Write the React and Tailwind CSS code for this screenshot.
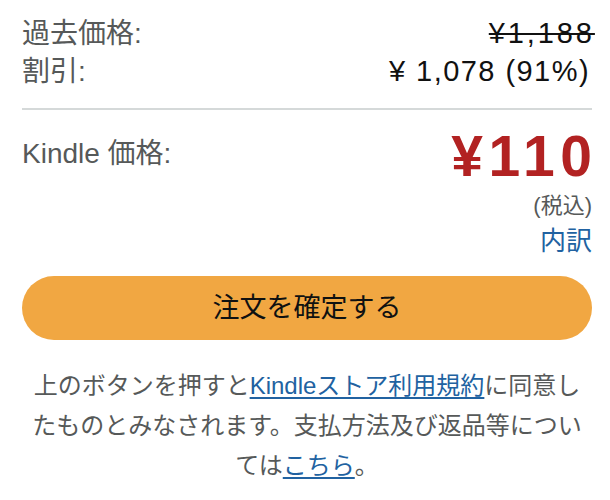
export default function App() {
  const font = { fontFamily: '"Liberation Sans", "Noto Sans CJK JP", sans-serif' };
  return (
    <div className="w-[610px] h-[500px] bg-white overflow-hidden" style={font}>
      <div className="pl-[22px] pr-[18px] pt-[15px]">
        <div className="flex justify-between items-center h-[38px] text-[28px]">
          <span className="text-[#565959]">過去価格:</span>
          <span className="text-[29px] text-[#111] line-through tracking-[0.1em] mr-[-0.1em]">¥1,188</span>
        </div>
        <div className="flex justify-between items-center h-[38px] text-[28px]">
          <span className="text-[#565959]">割引:</span>
          <span className="text-[29px] text-[#111] tracking-[0.05em] mr-[2px]">¥ 1,078 (91%)</span>
        </div>
        <div className="h-[2px] bg-[#D5D9D9] mt-[17px]"></div>

        <div className="flex justify-between items-start pt-[16px]">
          <span className="text-[28px] text-[#565959] leading-[38px] mt-[9px]">Kindle 価格:</span>
          <div className="flex flex-col items-end">
            <span className="text-[57px] font-bold text-[#B22222] leading-[60px] tracking-[0.1em] mr-[-0.1em]">¥110</span>
            <span className="text-[22px] text-[#565959] leading-[28px] mt-[6px]">(税込)</span>
            <span className="text-[26px] text-[#2162A1] leading-[30px] mt-[6px]">内訳</span>
          </div>
        </div>

        <button className="mt-[20px] w-full h-[64px] rounded-full bg-[#F1A742] text-[#0F1111] text-[27px] flex items-center justify-center">
          注文を確定する
        </button>

        <p className="mt-[26px] text-center text-[24px] leading-[40px] text-[#565959]">
          上のボタンを押すと<span className="text-[#2162A1] underline underline-offset-[3px]">Kindleストア利用規約</span>に同意し
          <br />
          たものとみなされます。支払方法及び返品等につい
          <br />
          ては<span className="text-[#2162A1] underline underline-offset-[3px]">こちら</span>。
        </p>
      </div>
    </div>
  );
}
